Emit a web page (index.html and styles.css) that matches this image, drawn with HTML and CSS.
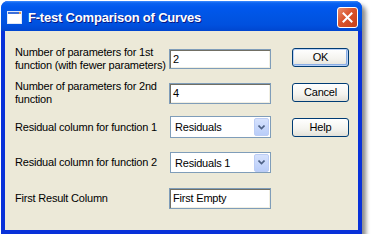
FILE: index.html
```html
<!DOCTYPE html>
<html lang="en">
<head>
  <meta charset="UTF-8">
  <title>F-test Comparison of Curves</title>
  <link rel="stylesheet" href="styles.css">
</head>
<body>
  <div class="window">
    <div class="titlebar">
      <svg class="app-icon" width="15" height="13" viewBox="0 0 15 13">
        <rect x="0.5" y="0.5" width="14" height="12" fill="#fff" stroke="#dfe7f7"/>
        <rect x="1" y="1" width="13" height="2" fill="#3d6fd9"/>
        <rect x="12" y="1" width="2" height="2" fill="#e8a050"/>
      </svg>
      <span class="title">F-test Comparison of Curves</span>
      <div class="close-btn">
        <svg width="11" height="11" viewBox="0 0 11 11">
          <path d="M1.5 1.5 L9.5 9.5 M9.5 1.5 L1.5 9.5" stroke="#fff" stroke-width="2" stroke-linecap="square"/>
        </svg>
      </div>
    </div>

    <div class="client">
      <div class="form">
        <div class="row r1">
          <label class="lbl">Number of parameters for 1st<br>function (with fewer parameters)</label>
          <div class="textbox">2</div>
        </div>
        <div class="row r2">
          <label class="lbl">Number of parameters for 2nd<br>function</label>
          <div class="textbox">4</div>
        </div>
        <div class="row r3">
          <label class="lbl">Residual column for function 1</label>
          <div class="combo"><span>Residuals</span><span class="drop"><svg width="7" height="5" viewBox="0 0 7 5"><path d="M0.5 0.5 L3.5 3.5 L6.5 0.5" fill="none" stroke="#4d6185" stroke-width="1.6"/></svg></span></div>
        </div>
        <div class="row r4">
          <label class="lbl">Residual column for function 2</label>
          <div class="combo"><span>Residuals 1</span><span class="drop"><svg width="7" height="5" viewBox="0 0 7 5"><path d="M0.5 0.5 L3.5 3.5 L6.5 0.5" fill="none" stroke="#4d6185" stroke-width="1.6"/></svg></span></div>
        </div>
        <div class="row r5">
          <label class="lbl">First Result Column</label>
          <div class="textbox">First Empty</div>
        </div>
      </div>

      <div class="buttons">
        <div class="btn default">OK</div>
        <div class="btn">Cancel</div>
        <div class="btn">Help</div>
      </div>
    </div>
  </div>
</body>
</html>
```

FILE: styles.css
```css
body{
  margin: 0;
  background-color: #fff;
  font-family: "Liberation Sans", Arial, sans-serif;
}

.window{ /* whole XP dialog with drop shadow */
  margin: 1px 0 0 1px;
  width: 361px;
  height: 233px;
  display: flex;
  flex-direction: column;
  border-radius: 7px 7px 0 0;
  background-color: #0831d9;
  box-shadow: 4px 4px 4px rgba(0, 0, 0, 0.45);
  overflow: hidden;
}

.titlebar{
  height: 30px;
  display: flex;
  align-items: center;
  padding: 0 4px 0 6px;
  background: linear-gradient(#3d8bff 0, #0a62f0 2px, #0058ee 6px, #0055e5 14px, #0050de 24px, #0046cf 30px);
  flex: none;
}

.app-icon{
  margin-top: 2px;
}

.title{
  margin-left: 6px;
  margin-top: 2px;
  color: #fff;
  font-weight: bold;
  font-size: 13px;
  letter-spacing: -0.2px;
  text-shadow: 1px 1px 0 #0a1883;
  flex: 1;
}

.close-btn{
  width: 19px;
  height: 19px;
  margin-top: 3px;
  border: 1px solid #fff;
  border-radius: 3px;
  background: linear-gradient(135deg, #e98d6c, #d9532c 45%, #c6401a);
  display: flex;
  align-items: center;
  justify-content: center;
}

.client{ /* grey face of the dialog */
  flex: 1;
  margin: 0 4px 4px 4px;
  background-color: #ece9d8;
  display: flex;
  font-size: 11px;
  letter-spacing: -0.2px;
  color: #000;
}

.form{
  padding: 10px 0 0 10px;
  display: grid;
  grid-template-rows: 35px 34px 34px 37px 34px;
  align-content: start;
}

.row{
  display: flex;
  align-items: center;
}

.lbl{
  width: 154px;
  line-height: 13px;
  white-space: nowrap;
}

.textbox{
  box-sizing: border-box;
  width: 102px;
  height: 20px;
  border: 1px solid #7f9db9;
  box-shadow: inset 1px 1px 0 #716f64, inset -1px -1px 0 #f1efe2;
  background-color: #fff;
  padding: 3px 0 0 3px;
  line-height: 13px;
}

.r2 .textbox,
.r5 .textbox{
  height: 21px;
}

.combo{
  box-sizing: border-box;
  width: 101px;
  height: 22px;
  margin-left: 1px;
  border: 1px solid #7f9db9;
  background-color: #fff;
  display: flex;
  align-items: center;
  justify-content: space-between;
  padding: 0 1px 0 4px;
}

.r4 .combo{
  height: 21px;
}

.drop{
  box-sizing: border-box;
  width: 15px;
  height: 18px;
  border: 1px solid #bccdf5;
  border-radius: 2px;
  background: linear-gradient(#d6e2fd, #b9cdf9);
  display: flex;
  align-items: center;
  justify-content: center;
}

.buttons{
  margin-left: 21px;
  padding-top: 17px;
  display: flex;
  flex-direction: column;
  gap: 16px;
}

.btn{
  box-sizing: border-box;
  width: 57px;
  height: 19px;
  border: 1px solid #003c74;
  border-radius: 3px;
  background: linear-gradient(#fff, #f4f3ee 60%, #e3e1d8);
  text-align: center;
  line-height: 17px;
}

.btn.default{
  box-shadow: inset 0 0 0 1px #b9d1f6, inset -1px -1px 0 1px #89ade4;
}
```
